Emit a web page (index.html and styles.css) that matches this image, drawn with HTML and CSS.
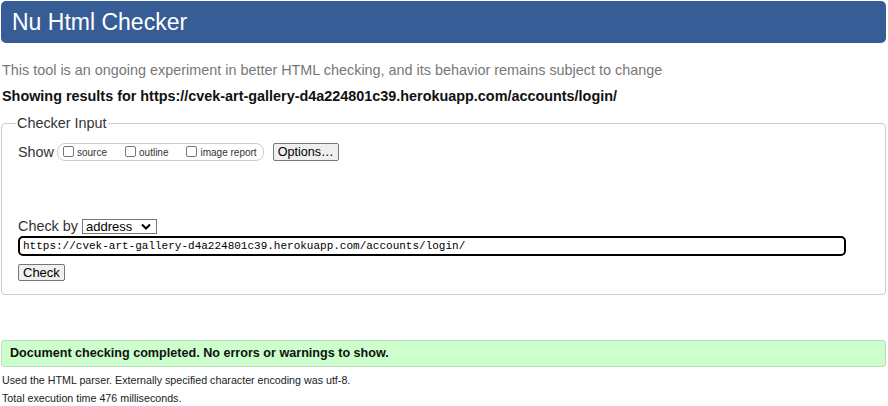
FILE: index.html
```html
<!DOCTYPE html>
<html>
<head>
<meta charset="utf-8">
<link rel="stylesheet" href="styles.css">
</head>
<body>
<h1 class="title">Nu Html Checker</h1>
<p class="intro">This tool is an ongoing experiment in better HTML checking, and its behavior remains subject to change</p>
<p class="showing">Showing results for https://cvek-art-gallery-d4a224801c39.herokuapp.com/accounts/login/</p>
<fieldset class="checker">
  <legend class="legend">Checker Input</legend>
  <div class="show-row">
    <span class="label">Show</span>
    <span class="show-box">
      <label class="opt"><span class="cb"></span>source</label>
      <label class="opt"><span class="cb"></span>outline</label>
      <label class="opt"><span class="cb"></span>image report</label>
    </span>
    <span class="btn options">Options…</span>
  </div>
  <div class="checkby-row">
    <span class="label">Check by</span>
    <span class="select">address<svg class="chev" width="10" height="7" viewBox="0 0 10 7"><path d="M1 1.5 L5 5.5 L9 1.5" fill="none" stroke="#000" stroke-width="2"/></svg></span>
  </div>
  <div class="url">https://cvek-art-gallery-d4a224801c39.herokuapp.com/accounts/login/</div>
  <span class="btn check">Check</span>
</fieldset>
<div class="success">Document checking completed. No errors or warnings to show.</div>
<p class="meta">Used the HTML parser. Externally specified character encoding was utf-8.</p>
<p class="meta">Total execution time 476 milliseconds.</p>
</body>
</html>
```
FILE: styles.css
```css
html, body { margin: 0; padding: 0; background: #fff; }
body { font-family: "Liberation Sans", Arial, sans-serif; color: #222; padding: 1px 2px 0 1px; }
.title {
  margin: 0;
  height: 42px;
  line-height: 42px;
  background: #365d95;
  color: #fff;
  font-weight: normal;
  font-size: 23px;
  padding-left: 11px;
  border-radius: 5px;
}
.intro { margin: 19px 0 0 1px; font-size: 14.4px; color: #777; line-height: 17px; }
.showing { margin: 9px 0 0 1px; font-size: 14.4px; font-weight: bold; color: #111; line-height: 17px; }
.checker {
  margin: 10px 0 0 0;
  border: 1px solid #ccc;
  border-radius: 4px;
  padding: 12px 16px 13px 16px;
}
.legend { font-size: 14.4px; color: #333; padding: 0 1px; margin-left: -2px; }
.label { font-size: 14.4px; color: #333; }
.show-row { display: flex; align-items: center; height: 18px; }
.show-box {
  display: flex; align-items: center; margin-left: 3px;
  border: 1px solid #ccc; border-radius: 8px;
  height: 16px; padding: 0 6px 0 5px; gap: 18px;
}
.opt { display: flex; align-items: flex-end; font-size: 10px; color: #333; line-height: 12px; }
.cb { width: 11px; height: 11px; border: 1px solid #767676; border-radius: 2px; margin-right: 3px; margin-bottom: 2px; box-sizing: border-box; background: #fff; }
.btn {
  display: inline-block; font-size: 13px; color: #000;
  background: #efefef; border: 1px solid #767676; border-radius: 2px;
  line-height: 15px; padding: 0 5px; box-sizing: border-box;
}
.options { margin-left: 9px; height: 18px; line-height: 16px; font-size: 12.6px; padding: 0 4px; }
.checkby-row { display: flex; align-items: center; margin-top: 57px; height: 16px; }
.select {
  display: flex; align-items: center; justify-content: space-between;
  margin-left: 4px; width: 75px; height: 15px; box-sizing: border-box;
  border: 1px solid #767676; font-size: 13px; color: #000; padding: 0 5px 0 3px; line-height: 13px;
}
.url {
  margin-top: 2px; height: 20px; box-sizing: border-box;
  border: 2px solid #000; border-radius: 5px; width: 828px;
  font-family: "Liberation Mono", "Courier New", monospace; font-size: 11px; line-height: 16px;
  padding-left: 3px; color: #000;
}
.check { margin-top: 8px; height: 17px; line-height: 15px; padding: 0 4px; }
.success {
  margin: 45px 0 0 0; height: 27px; box-sizing: border-box;
  background: #ccffcc; border: 1px solid #c0d8c0; border-radius: 3px;
  font-weight: bold; font-size: 12.6px; line-height: 25px; padding-left: 8px; color: #111;
}
.meta { font-size: 10.7px; margin: 7px 0 0 1px; line-height: 12px; color: #222; }
.meta + .meta { margin-top: 6px; }
```
